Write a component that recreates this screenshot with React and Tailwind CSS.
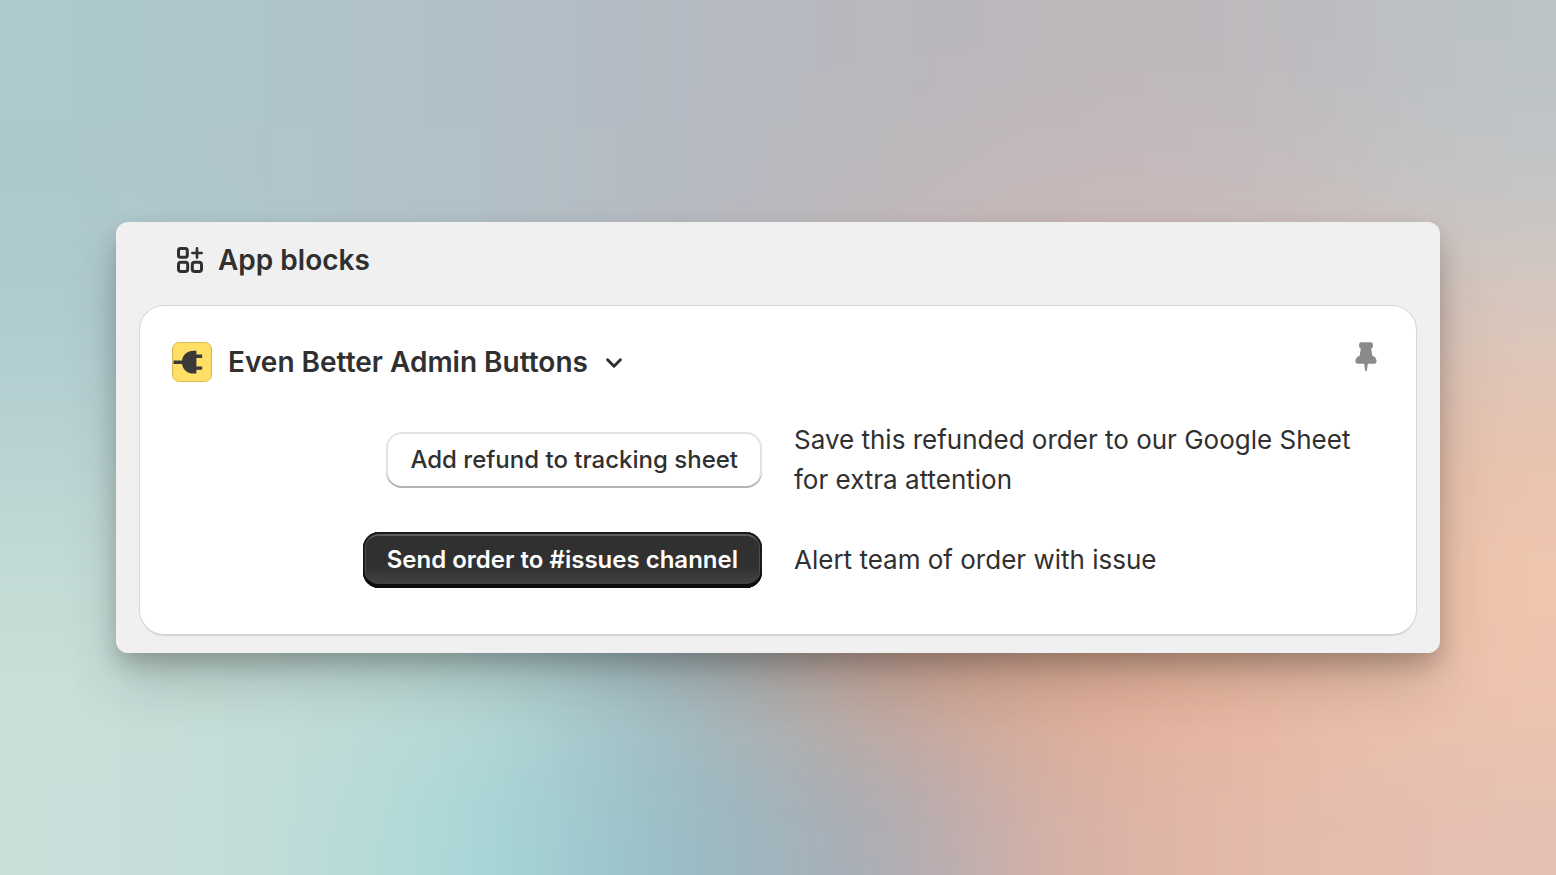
import React from 'react';

const BACKDROP = [
  ['#acc9cd', '#afc4c9', '#b1bfc6', '#b4bac3', '#b8b8bd', '#bdb6bb', '#bdb9bd', '#bbc3c7'],
  ['#adc8cd', '#b0c4c9', '#b2c0c7', '#b5bac2', '#bcb8bc', '#c6b8b9', '#c7bcbd', '#c4c5c5'],
  ['#afcbcf', '#b2c8cc', '#b4c0c6', '#b8b9c0', '#c8b8b8', '#d1b7b3', '#d2bbb5', '#d9c7bd'],
  ['#b8d2d3', '#b8cfd0', '#b5c6ca', '#b4b8be', '#c8b3b0', '#d9b3a6', '#deb8a8', '#e6c3b0'],
  ['#c2dad5', '#c0d8d3', '#b9d2d0', '#a4b5ba', '#d0a390', '#dcab95', '#e5b59d', '#f0c5ad'],
  ['#c9dfd8', '#c4ddd7', '#bad9d6', '#9fb9c1', '#c7a497', '#e2ad95', '#e9b9a2', '#eec4ae'],
  ['#cadeda', '#c0dcd8', '#a6d8d9', '#98bbc5', '#a9acb5', '#dbb1a5', '#e5baaa', '#e5c0b3'],
];

const clamp = (n, max) => Math.min(Math.max(n, 0), max);

function Backdrop() {
  const cells = [];
  for (let r = -2; r < 9; r++) {
    for (let c = -2; c < 10; c++) {
      cells.push(
        <rect key={`${r}:${c}`} x={c * 100} y={r * 100} width="101" height="101" fill={BACKDROP[clamp(r, 6)][clamp(c, 7)]} />
      );
    }
  }
  return (
    <svg aria-hidden="true" className="absolute inset-0 -z-10 h-full w-full" viewBox="0 0 800 700" preserveAspectRatio="none">
      <defs>
        <filter id="soften" filterUnits="userSpaceOnUse" x="-200" y="-200" width="1200" height="1100" colorInterpolationFilters="sRGB">
          <feGaussianBlur stdDeviation="46" />
        </filter>
      </defs>
      <g filter="url(#soften)">{cells}</g>
    </svg>
  );
}

function BlocksIcon() {
  return (
    <svg aria-hidden="true" className="size-7 shrink-0" viewBox="0 0 28 28" fill="none" stroke="#303030" strokeWidth="3" strokeLinecap="round">
      <rect x="2.5" y="2.5" width="8.8" height="8.8" rx="2" />
      <rect x="2.5" y="16.3" width="9.2" height="9.2" rx="2.4" />
      <rect x="16.3" y="16.3" width="9.2" height="9.2" rx="2.4" />
      <path strokeWidth="2.7" d="M21 2.4v9.2M16.4 7h9.2" />
    </svg>
  );
}

function PlugLogo() {
  return (
    <svg aria-hidden="true" className="size-10 shrink-0" viewBox="0 0 40 40">
      <rect x="0.5" y="0.5" width="39" height="39" rx="6.5" fill="#ffdf66" stroke="#d6bb58" />
      <path fill="#3a3a3a" d="M1.5 18.4H10C11 12.4 15.6 8.8 21.5 8.8H24.4V12.6H30.2V16H24.4V24.4H30.2V27.8H24.4V31.6H21.5C15.6 31.6 11 28 10 22H1.5Z" />
    </svg>
  );
}

function ChevronIcon() {
  return (
    <svg aria-hidden="true" className="size-5" viewBox="0 0 20 20" fill="none" stroke="#303030" strokeWidth="3" strokeLinecap="round" strokeLinejoin="round">
      <path d="M3.6 7.8 10 14.2 16.4 7.8" />
    </svg>
  );
}

function PinIcon() {
  return (
    <svg aria-hidden="true" className="h-[30px] w-6" viewBox="0 0 24 30" fill="#8a8a8a">
      <path d="M7.2 0.3H16.8Q18.9 0.3 18.9 2.4V4.2Q18.9 6.2 17.2 6.6L18.3 13.8C21 14.6 22.6 16.6 22.6 19.6Q22.6 21.7 20.5 21.7H13.9L12.9 28.2Q12.6 29.4 12 29.4T11.1 28.2L10.1 21.7H3.5Q1.4 21.7 1.4 19.6C1.4 16.6 3 14.6 5.7 13.8L6.8 6.6Q5.1 6.2 5.1 4.2V2.4Q5.1 0.3 7.2 0.3Z" />
    </svg>
  );
}

const BUTTON_STYLES = {
  plain:
    'bg-white font-medium text-[#303030] shadow-[inset_0_-2px_0_#b5b5b5,inset_0_0_0_2px_#e3e3e3]',
  primary:
    'bg-linear-to-b from-[#303030] from-60% to-[#474747] font-semibold text-white shadow-[inset_0_-4px_0_#0d0d0d,inset_0_0_0_2px_#1a1a1a,inset_0_4px_0_#5c5c5c,inset_3px_0_0_#4d4d4d,inset_-3px_0_0_#4d4d4d]',
};

function ActionRow({ variant, label, children }) {
  return (
    <div className="grid grid-cols-2 items-center gap-8">
      <button type="button" className={`h-14 justify-self-end rounded-2xl px-6 text-2xl whitespace-nowrap ${BUTTON_STYLES[variant]}`}>
        {label}
      </button>
      <p className="text-[26px] leading-10 text-[#303030]">{children}</p>
    </div>
  );
}

export default function App() {
  return (
    <div className="relative isolate flex min-h-screen items-center overflow-hidden px-[116px] font-['Inter',sans-serif] text-[#303030] antialiased">
      <Backdrop />
      <main className="w-full rounded-xl bg-[#f0f0f0] px-6 pb-[19px] shadow-[0_32px_56px_-4px_rgba(0,0,0,0.16),0_12px_24px_-2px_rgba(0,0,0,0.22)]">
        <header className="flex items-center gap-3.5 px-9 pt-[18px] pb-[26px]">
          <BlocksIcon />
          <h1 className="text-[28px] leading-10 font-semibold">App blocks</h1>
        </header>
        <section className="rounded-3xl bg-white px-8 pt-9 pb-[46px] shadow-[0_0_0_1px_#d6d6d6,0_2px_1px_rgba(0,0,0,0.12)]">
          <div className="flex items-start justify-between pb-[38px]">
            <div className="flex items-center gap-4">
              <PlugLogo />
              <h2 className="text-[28px] leading-10 font-semibold">Even Better Admin Buttons</h2>
              <button type="button" aria-label="Switch block">
                <ChevronIcon />
              </button>
            </div>
            <button type="button" aria-label="Pin block" className="mr-1.5">
              <PinIcon />
            </button>
          </div>
          <div className="flex flex-col gap-8">
            <ActionRow variant="plain" label="Add refund to tracking sheet">
              Save this refunded order to our Google Sheet for extra attention
            </ActionRow>
            <ActionRow variant="primary" label="Send order to #issues channel">
              Alert team of order with issue
            </ActionRow>
          </div>
        </section>
      </main>
    </div>
  );
}
